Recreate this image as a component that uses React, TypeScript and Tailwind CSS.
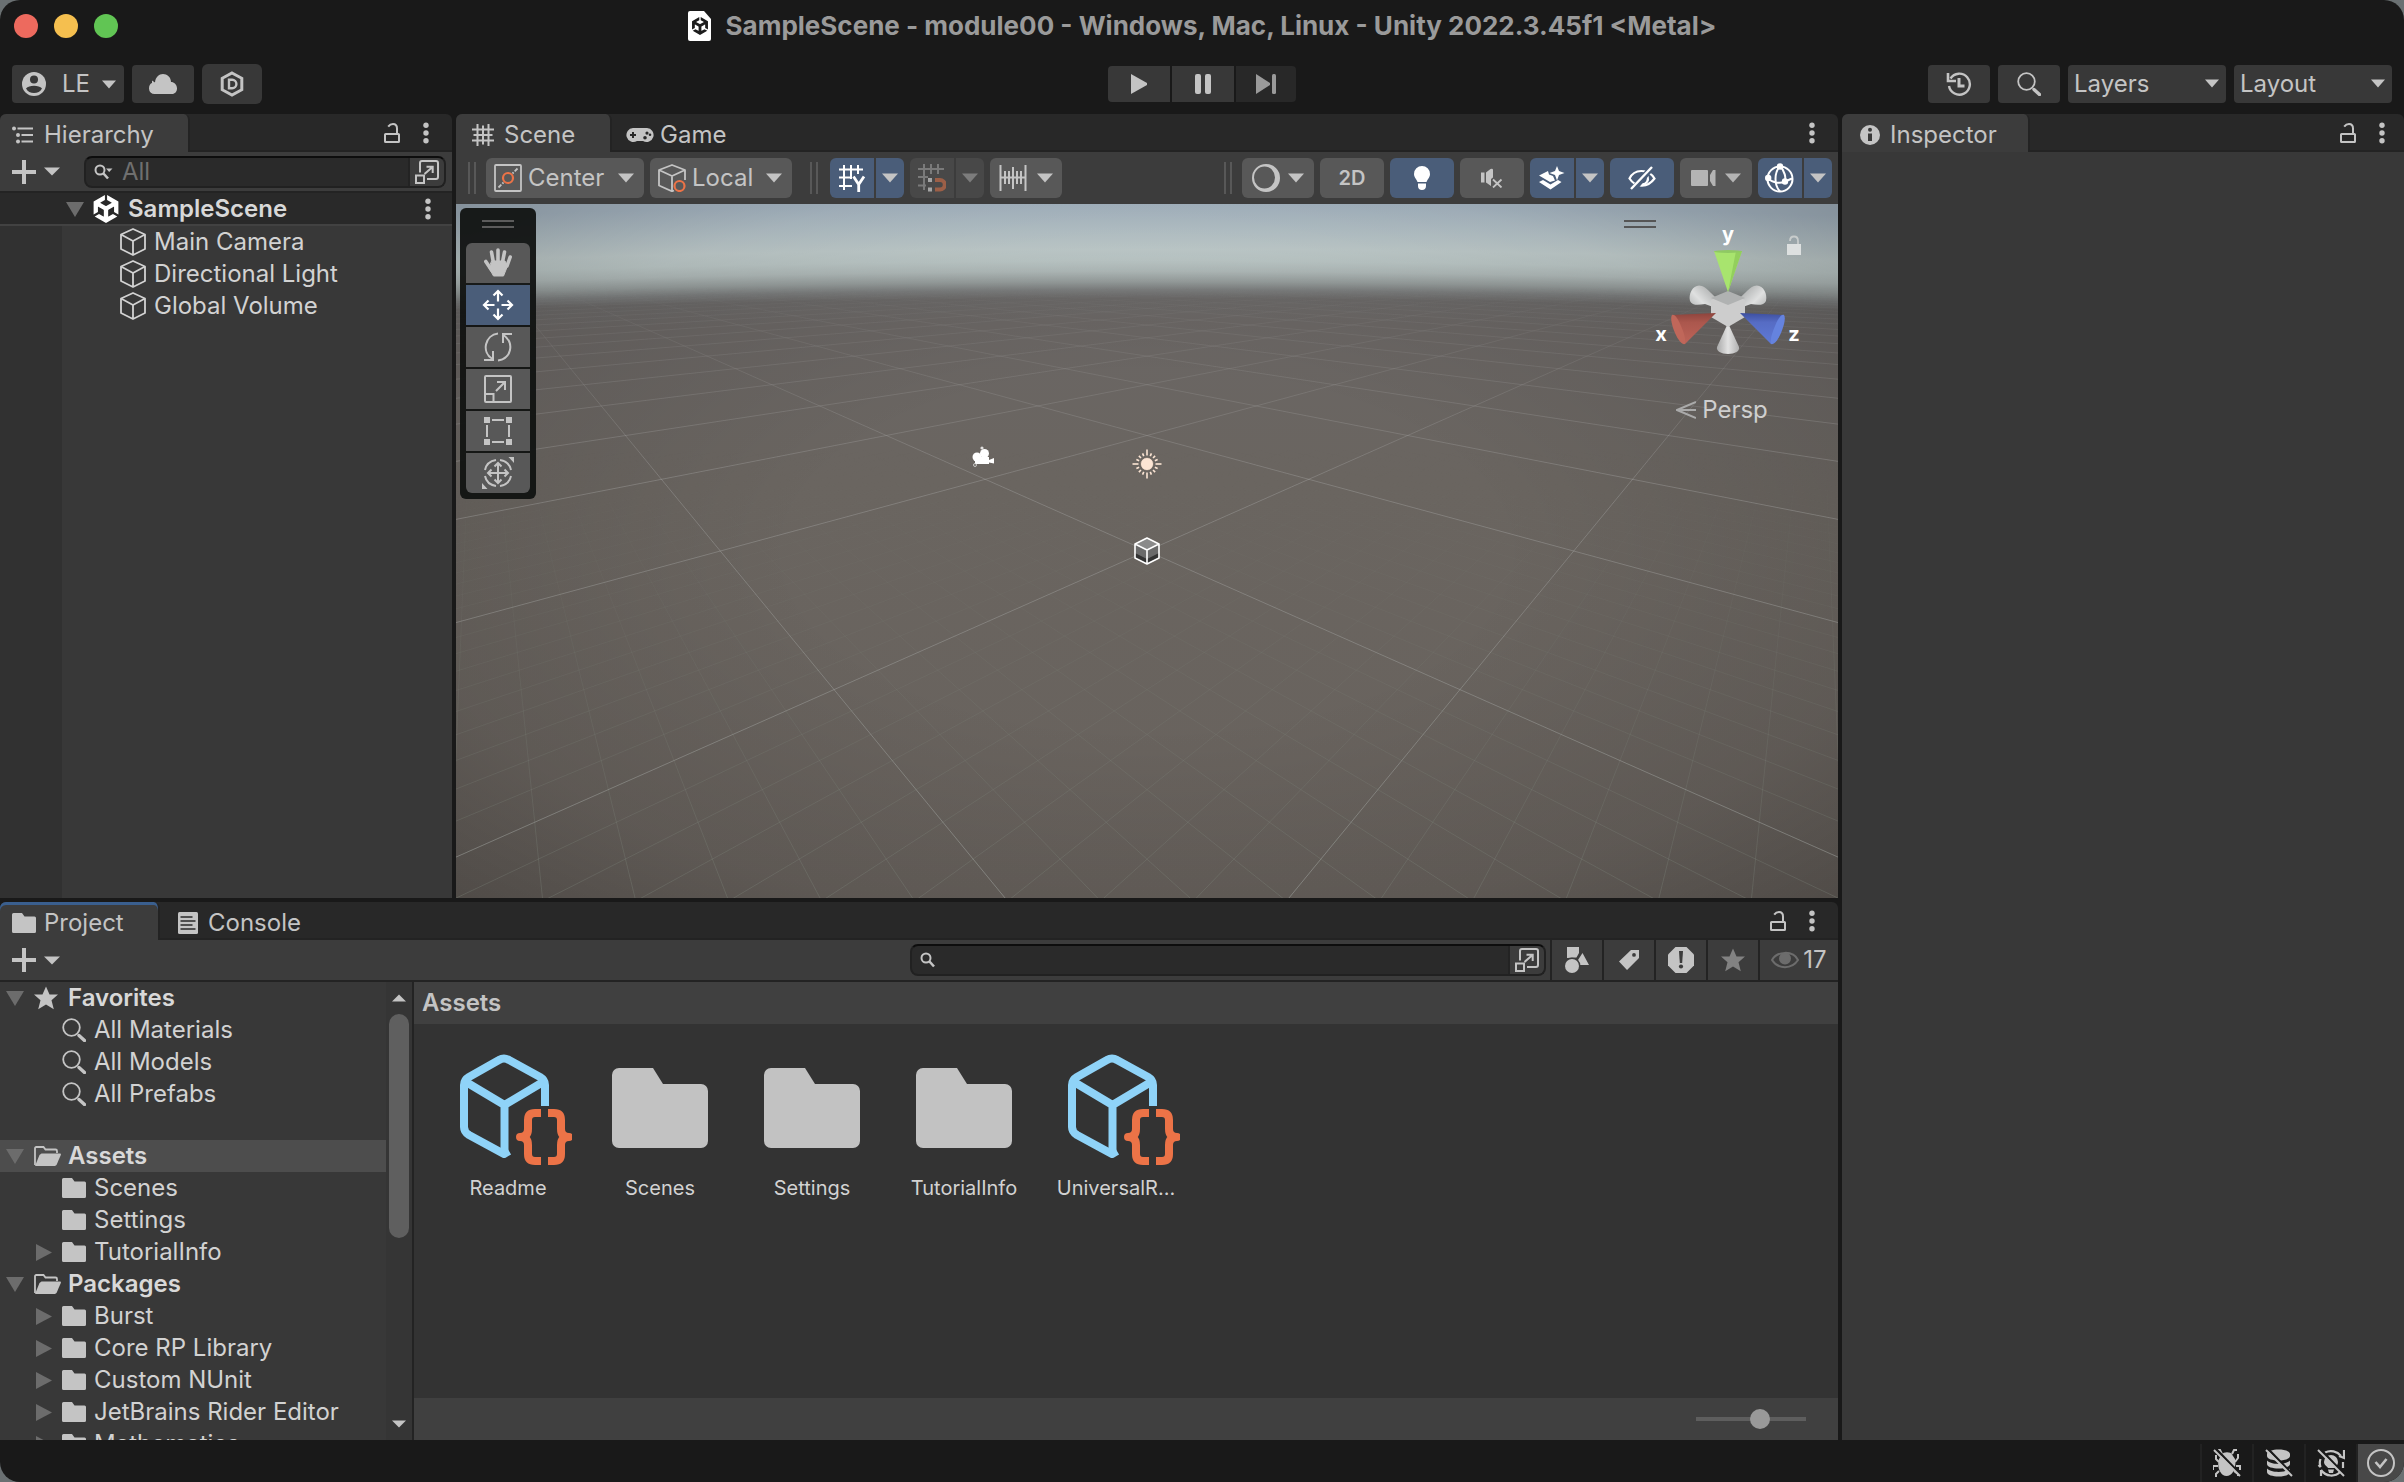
import { useState } from "react";
import type { ReactNode } from "react";
import clsx from "clsx";
import { SiUnity } from "react-icons/si";

type IconProps = { className?: string };

/* ---------- icons ---------- */

function Caret({ className = "w-3.5 h-2.5" }: IconProps) {
  return (
    <svg viewBox="0 0 14 10" preserveAspectRatio="none" className={clsx("shrink-0 fill-current", className)}>
      <path d="M0 0.5h14L7 9.5z" />
    </svg>
  );
}

function Foldout({ open, className }: IconProps & { open: boolean }) {
  return (
    <svg viewBox="0 0 18 18" className={clsx("w-[18px] h-[18px] shrink-0 fill-[#6c6c6c]", className)}>
      <path d={open ? "M0 2h18L9 17z" : "M2 1v17L18 9.500z"} />
    </svg>
  );
}

function Kebab() {
  return (
    <svg viewBox="0 0 6 22" className="w-1.5 h-[22px] fill-current">
      <circle cx="3" cy="3.2" r="2.7" />
      <circle cx="3" cy="11" r="2.7" />
      <circle cx="3" cy="18.8" r="2.7" />
    </svg>
  );
}

function Lock() {
  return (
    <svg viewBox="0 0 16 20" className="w-4 h-5 fill-none stroke-current" strokeWidth="2">
      <rect x="1" y="11" width="14" height="8" rx="0.6" />
      <path d="M13 11V5.5C13 2.8 11.4 1 9 1 7 1 5.400 2 4.200 3.600" />
    </svg>
  );
}

function Cube({ className = "w-[26px] h-7" }: IconProps) {
  return (
    <svg viewBox="0 0 26 28" className={clsx("shrink-0 fill-none stroke-current", className)} strokeWidth="1.8" strokeLinejoin="round">
      <path d="M13 1 25 6.500V21L13 27 1 21V6.500zM1 6.500l12 6.500 12-6.500M13 13v14" />
    </svg>
  );
}

function Plus() {
  return (
    <svg viewBox="0 0 24 24" className="w-6 h-6 fill-current">
      <path d="M10 0h4v10h10v4H14v10h-4V14H0v-4h10z" />
    </svg>
  );
}

function Magnifier({ className = "w-6 h-6" }: IconProps) {
  return (
    <svg viewBox="0 0 24 24" className={clsx("shrink-0 fill-none stroke-current", className)}>
      <circle cx="9.500" cy="9.500" r="8.300" strokeWidth="1.800" />
      <path d="M17 17.500l5.500 5" strokeWidth="3.400" strokeLinecap="round" />
    </svg>
  );
}

function SmallMagnifier({ menu }: { menu?: boolean }) {
  return (
    <svg viewBox="0 0 20 16" className="w-5 h-4 shrink-0 fill-none stroke-current">
      <circle cx="6" cy="6" r="4.500" strokeWidth="2" />
      <path d="M9.500 9.500l4.500 5" strokeWidth="2.600" />
      {menu && <path d="M12 4.500h6.500L15.200 8z" className="fill-current stroke-none" />}
    </svg>
  );
}

function OpenSearch() {
  return (
    <svg viewBox="0 0 24 24" className="w-6 h-6 fill-none stroke-current" strokeWidth="2">
      <path d="M5 12.500V3a2 2 0 0 1 2-2h14a2 2 0 0 1 2 2v14a2 2 0 0 1-2 2H12" />
      <path d="M1 15.500h8V23H1zM9.500 14l8-7M11.500 6.800h6.200V13" />
    </svg>
  );
}

function Folder() {
  return (
    <svg viewBox="0 0 24 20" className="w-6 h-5 shrink-0 fill-current">
      <path d="M1.500 0H10l2.500 3.500H22.500A1.500 1.500 0 0 1 24 5v13.500a1.500 1.500 0 0 1-1.500 1.500h-21A1.500 1.500 0 0 1 0 18.500v-17A1.500 1.500 0 0 1 1.500 0z" />
    </svg>
  );
}

function FolderOpen() {
  return (
    <svg viewBox="0 0 27 20" className="w-[27px] h-5 shrink-0">
      <path d="M1 19V2.200A1.200 1.200 0 0 1 2.200 1H9.500l2 2.500H21.500a1.500 1.500 0 0 1 1.500 1.500V7" className="fill-none stroke-current" strokeWidth="1.800" />
      <path d="M1 20L5.500 9 7.500 7.500H26.500L27 8.500 22.500 19 21 20z" className="fill-current" />
    </svg>
  );
}

function Star({ className = "w-6 h-6" }: IconProps) {
  return (
    <svg viewBox="0 0 24 24" className={clsx("shrink-0 fill-current", className)}>
      <path d="M12 0.500l3.500 8H24l-6.500 5.700 2.300 9L12 18.500l-7.800 4.700 2.300-9L0 8.500h8.500z" />
    </svg>
  );
}

function HierarchyIcon() {
  return (
    <svg viewBox="0 0 22 18" className="w-[22px] h-[18px] fill-current">
      <circle cx="2" cy="2.500" r="2" />
      <circle cx="6" cy="9" r="2" />
      <circle cx="6" cy="15.500" r="2" />
      <path d="M5.500 1.600H21v2H5.500zM9.500 8H21v2H9.500zM9.500 14.500H21v2H9.500z" />
    </svg>
  );
}

function SceneGridIcon() {
  return (
    <svg viewBox="0 0 22 22" className="w-[22px] h-[22px] fill-none stroke-current" strokeWidth="2">
      <path d="M5.500 0v22M11 1.500v19M16.500 0v22M0 5.500h22M1.500 11h19M0 16.500h22" />
    </svg>
  );
}

function Gamepad() {
  return (
    <svg viewBox="0 0 28 16" className="w-7 h-4">
      <path className="fill-current" fillRule="evenodd" d="M7 1h14a7 7 0 1 1-4 13h-6A7 7 0 1 1 7 1zM6 5v2H4v2h2v2h2V9h2V7H8V5zM21 4.500a1.600 1.600 0 1 0 0 3.200 1.600 1.600 0 0 0 0-3.200zM19 9a1.800 1.800 0 1 0 0 3.600A1.800 1.800 0 0 0 19 9zM24 6.500a1.300 1.300 0 1 0 0 2.600 1.300 1.300 0 0 0 0-2.600z" />
    </svg>
  );
}

function ConsoleIcon() {
  return (
    <svg viewBox="0 0 20 22" className="w-5 h-[22px]">
      <rect width="20" height="22" rx="1.500" className="fill-current" />
      <path d="M2.500 5h12M2.500 9h15M2.500 13h12M2.500 17h15" stroke="#282828" strokeWidth="1.700" />
    </svg>
  );
}

function InfoIcon() {
  return (
    <svg viewBox="0 0 20 20" className="w-5 h-5">
      <circle cx="10" cy="10" r="10" className="fill-current" />
      <path d="M8 8.500h4V16H8z" fill="#383838" />
      <circle cx="10" cy="4.800" r="2" fill="#383838" />
    </svg>
  );
}

function UserIcon() {
  return (
    <svg viewBox="0 0 24 24" className="w-6 h-6">
      <circle cx="12" cy="12" r="12" className="fill-current" />
      <circle cx="12" cy="7.500" r="4" fill="#383838" />
      <path d="M4 16.500c3-3.600 13-3.600 16 0-1.500 3-4.500 4.500-8 4.500s-6.500-1.500-8-4.500z" fill="#383838" />
    </svg>
  );
}

function CloudIcon() {
  return (
    <svg viewBox="0 0 28 20" className="w-7 h-5 fill-current">
      <path d="M5.500 20A5.500 5.500 0 0 1 0 14.500C0 11 1.500 9.500 3 9V6.500l3 2C6.500 3 10 0 14 0s8 3 8 8c3 0 6 2.500 6 6.500 0 3-2 5.500-5 5.500z" />
    </svg>
  );
}

function DevOpsIcon() {
  return (
    <svg viewBox="0 0 24 26" className="w-6 h-[26px] fill-none stroke-current">
      <path d="M12 2l9.800 5.300v11.400L12 24l-9.800-5.300V7.300z" strokeWidth="3" />
      <path d="M9 8.800h3.200a4.200 4.200 0 0 1 0 8.400H9z" strokeWidth="2.400" />
    </svg>
  );
}

function HistoryIcon() {
  return (
    <svg viewBox="0 0 26 26" className="w-[26px] h-[26px] fill-none stroke-current">
      <path d="M4.500 7.500A10.500 10.500 0 1 1 3 15" strokeWidth="2.400" />
      <path d="M2 2v8h8" strokeWidth="2.600" />
      <path d="M13 7v8h5.500" strokeWidth="3" />
    </svg>
  );
}

/* scene view toolbar */

function PivotIcon() {
  return (
    <svg viewBox="0 0 28 28" className="w-7 h-7 fill-none">
      <rect x="1" y="1" width="26" height="26" rx="1" className="stroke-current" strokeWidth="1.800" />
      <path d="M23.500 4.500l-5 5M4.500 23.500l5-5" className="stroke-current" strokeWidth="1.800" strokeDasharray="4 1.500" />
      <circle cx="14" cy="14" r="5" stroke="#ec7347" strokeWidth="2.200" />
    </svg>
  );
}

function LocalIcon() {
  return (
    <svg viewBox="0 0 28 28" className="w-7 h-7 fill-none">
      <path d="M16 26.500l-2 .8L1 21.500V6L14 1l13 5v10M1 6l13 6 13-6M14 12v15" className="stroke-current" strokeWidth="1.800" strokeLinejoin="round" />
      <circle cx="21.500" cy="22" r="5" stroke="#ec7347" strokeWidth="2.200" />
    </svg>
  );
}

function GridSnapIcon() {
  return (
    <svg viewBox="0 0 28 28" className="w-7 h-7 fill-none stroke-white" strokeWidth="2">
      <path d="M6 1v25M13 1v14M20 1v9M1 5.500h24M1 13.500h13M1 22h13" />
      <path d="M15.500 12.500l5.200 8M26 12.500l-5.300 8V28" strokeWidth="2.800" />
    </svg>
  );
}

function MagnetIcon() {
  return (
    <svg viewBox="0 0 28 28" className="w-7 h-7 fill-none" strokeWidth="2">
      <path d="M6 0v26M13 0v10M20 0v10M0 5h26M0 13h10M0 21.500h8" stroke="#7a7a7a" />
      <path d="M17 16h5a4.500 4.500 0 0 1 0 9.500h-5" stroke="#9c5f47" strokeWidth="4" />
      <path d="M10 14h4v4h-4zM10 23.500h4v4h-4z" fill="#a5a5a5" />
    </svg>
  );
}

function IncrementIcon() {
  return (
    <svg viewBox="0 0 28 28" className="w-7 h-7 fill-none stroke-current" strokeWidth="2">
      <path d="M1.500 1v26M26.500 1v26M14 3v22M6 7v13M10 7v13M18 7v13M22 7v13M1 13.500h26" />
    </svg>
  );
}

function ShadingIcon() {
  return (
    <svg viewBox="0 0 28 28" className="w-7 h-7">
      <path fillRule="evenodd" className="fill-current" d="M14 0a14 14 0 1 0 0 28 14 14 0 0 0 0-28zM12.500 2.500a10.500 11 0 1 1 0 22 10.500 11 0 0 1 0-22z" />
    </svg>
  );
}

function BulbIcon() {
  return (
    <svg viewBox="0 0 16 24" className="w-4 h-6 fill-white">
      <path d="M8 0a8 8 0 0 1 8 8c0 3.500-2.500 5-3.500 8h-9C2.500 13 0 11.500 0 8a8 8 0 0 1 8-8zM4 17.500h8V20c0 2.500-1.500 4-4 4s-4-1.500-4-4z" />
    </svg>
  );
}

function MuteIcon() {
  return (
    <svg viewBox="0 0 22 20" className="w-[22px] h-5">
      <path d="M0 4.500h3.500v10H0zM5 4.500L9.500 1Q12 0 12 2v7.500l-2 1.500v7L5 14.500z" className="fill-current" />
      <path d="M12 11.500l8.500 8M20.500 11.500l-8.500 8" className="fill-none stroke-current" strokeWidth="1.800" />
    </svg>
  );
}

function EffectsIcon() {
  return (
    <svg viewBox="0 0 26 24" className="w-[26px] h-6 fill-white">
      <path d="M18 0l2 5 5.500 2-5.500 2-2 5.500L16 9l-5.500-2L16 5z" />
      <path d="M0 9.500L9 5l1 3.500 4 1.500 2 4.500-5 1.500zM0 16l4-2 7.500 4.500L19 14l3.500 2L11.500 23.500z" />
    </svg>
  );
}

function HiddenIcon() {
  return (
    <svg viewBox="0 0 28 24" className="w-7 h-6 fill-none stroke-white" strokeWidth="2.200">
      <path d="M1.500 12.500C6 3 20 2 26.500 12.500 20 21.500 8 22.500 1.500 12.500z" />
      <path d="M16 7.500a5.500 5.500 0 1 1-6 8.500" />
      <path d="M5 24L24 1" stroke="#4a5d79" strokeWidth="6" />
      <path d="M3 23L24 1" strokeWidth="2.400" />
    </svg>
  );
}

function CameraIcon() {
  return (
    <svg viewBox="0 0 26 18" className="w-[26px] h-[18px] fill-current">
      <rect y="1" width="17" height="16" rx="1" />
      <path d="M19 6l3-5h2.500v16H22l-3-5z" />
    </svg>
  );
}

function GizmoIcon() {
  return (
    <svg viewBox="0 0 30 30" className="w-[30px] h-[30px] fill-none stroke-white" strokeWidth="2">
      <circle cx="15" cy="16" r="12.500" />
      <path d="M15 3c-6 7-6 19 0 25.500M15 3c5 5 6 12 5 16M3 15c4 5 12 6 17 3.500l7-3" />
      <g className="fill-white stroke-none">
        <circle cx="15" cy="3.500" r="3.200" />
        <circle cx="3.200" cy="15" r="3.200" />
        <circle cx="20" cy="18.500" r="3.200" />
      </g>
    </svg>
  );
}

/* scene tools */

function HandTool() {
  return (
    <svg viewBox="0 0 28 30" className="w-7 h-[30px] fill-current stroke-current" strokeWidth="3.600" strokeLinecap="round">
      <path d="M9.500 15L7.500 4M14 14V2M18.500 14l2-10M23 18l3.200-9M7.500 22L1.800 13.500" className="fill-none" />
      <path d="M8 13h13l2.500 5L19.500 28h-10L5 20z" strokeWidth="1" />
    </svg>
  );
}

function MoveTool() {
  return (
    <svg viewBox="0 0 32 32" className="w-8 h-8 fill-none stroke-white" strokeWidth="2.200">
      <path d="M16 2v10.500M11.500 6.500L16 2l4.500 4.500M16 30V19.500M11.500 25.500L16 30l4.500-4.500M2 16h10.500M6.500 11.500L2 16l4.500 4.500M30 16H19.500M25.500 11.500L30 16l-4.500 4.500" />
    </svg>
  );
}

function RotateTool() {
  return (
    <svg viewBox="0 0 32 32" className="w-8 h-8 fill-none stroke-current" strokeWidth="2">
      <path d="M16 2.500C3 4 -1 21 10.500 28M16 29.500c13-2 17-17 5.500-25.500" />
      <path d="M21 12V3h9M2 29h9v-9" />
    </svg>
  );
}

function ScaleTool() {
  return (
    <svg viewBox="0 0 28 28" className="w-7 h-7 fill-none stroke-current" strokeWidth="2">
      <rect x="1" y="1" width="26" height="26" rx="1" />
      <path d="M1 19h8.500v8M12 16l9-9M13 7h8v8" />
    </svg>
  );
}

function RectTool() {
  return (
    <svg viewBox="0 0 28 28" className="w-7 h-7 fill-current">
      <path d="M0 0h6v6H0zM22 0h6v6h-6zM0 22h6v6H0zM22 22h6v6h-6zM8 2h12v2H8zM8 24h12v2H8zM2 8h2v12H2zM24 8h2v12h-2z" />
    </svg>
  );
}

function TransformTool() {
  return (
    <svg viewBox="0 0 32 32" className="w-8 h-8 fill-none stroke-current" strokeWidth="2">
      <path d="M14 3C8 4 4 8 3 13M3 19c1 5 5 9 11 10M18 29c6-1 10-5 11-10M29 13c-1-5-5-9-11-10" />
      <path d="M16 6v20M6 16h20M12.500 9.500L16 6l3.500 3.500M12.500 22.500L16 26l3.500-3.500M9.500 12.500L6 16l3.500 3.500M22.500 12.500L26 16l-3.500 3.500" />
      <path d="M26.500 0H32v6zM0 32v-6l5.500 6z" className="fill-current stroke-none" />
    </svg>
  );
}

/* project toolbar */

function TypeFilterIcon() {
  return (
    <svg viewBox="0 0 24 26" className="w-6 h-[26px] fill-current">
      <path d="M2 0h12v6l-2.500 4.500L2 11zM17.500 6L24 18h-9l-2-5z" />
      <circle cx="7" cy="19" r="8.500" fill="#3c3c3c" />
      <circle cx="7" cy="19" r="7" />
    </svg>
  );
}

function TagIcon() {
  return (
    <svg viewBox="0 0 20 20" className="w-5 h-5 fill-current">
      <path fillRule="evenodd" d="M12 0h8v8L8 20l-8-8.500zM15 3a1.900 1.900 0 1 0 0 3.800A1.900 1.900 0 0 0 15 3z" />
    </svg>
  );
}

function AlertIcon() {
  return (
    <svg viewBox="0 0 26 26" className="w-[26px] h-[26px]">
      <path d="M7.500 0h11L26 7.500v11L18.500 26h-11L0 18.500v-11z" className="fill-current" />
      <path d="M11 4h4l-.8 12h-2.400z" fill="#3c3c3c" />
      <circle cx="13" cy="19.500" r="2.100" fill="#3c3c3c" />
    </svg>
  );
}

function EyeIcon() {
  return (
    <svg viewBox="0 0 28 18" className="w-7 h-[18px]">
      <path d="M1 9C6 0 22-1 27 9 21 18.500 7 18.500 1 9z" fill="none" stroke="#6c6c6c" strokeWidth="2" />
      <circle cx="14" cy="7.500" r="6" fill="#6c6c6c" />
    </svg>
  );
}

/* status bar */

function BugOffIcon() {
  return (
    <svg viewBox="0 0 28 28" className="w-7 h-7">
      <path d="M9 5.500C10 2.500 18 2.500 19 5.500L22 10c1.500 6-1 14-5 16-2 1.200-5 1.200-7 0-4-3-6-10-4-16z" className="fill-current" />
      <path d="M9 5L7 1H5M19 5l2-4h3M6 13l-3-3V6M22 13l3-4V5M5 17H0v4M23 17h4v4M6 22l-3 3v3M21 22l4 3v2" className="fill-none stroke-current" strokeWidth="2" />
      <path d="M3 0l25 26" stroke="#191919" strokeWidth="2.500" />
      <path d="M1 1l26 26" className="stroke-current" strokeWidth="2" />
    </svg>
  );
}

function CacheOffIcon() {
  return (
    <svg viewBox="0 0 28 28" className="w-7 h-7">
      <path d="M2 5c0-6 23-6 23 0v2c0 6-23 6-23 0zM2 11.500c4 4.500 19 4.500 23 0V15c0 6-23 6-23 0zM2 19.500c4 4.500 19 4.500 23 0V23c0 6-23 6-23 0z" className="fill-current" />
      <path d="M3 0l25 26" stroke="#191919" strokeWidth="2.500" />
      <path d="M1 1l26 26" className="stroke-current" strokeWidth="2" />
    </svg>
  );
}

function AutoLightOffIcon() {
  return (
    <svg viewBox="0 0 28 28" className="w-7 h-7">
      <path d="M8 3.500A13 13 0 0 1 24 7M27 1v8l-5-2M3.500 10a12 12 0 0 0 0 8l-2-2M4 21v6M4 21c5 7 14 7 19 2M26 19v-6" className="fill-none stroke-current" strokeWidth="2.200" />
      <path d="M14 6a7 7 0 0 1 7 7c0 3-2 4-3 6h-7c-1-2-4-3-4-6a7 7 0 0 1 7-7zM11 20.500h6L16 24h-4z" className="fill-current" />
      <path d="M3 0l25 26" stroke="#191919" strokeWidth="2.500" />
      <path d="M1 1l26 26" className="stroke-current" strokeWidth="2" />
    </svg>
  );
}

function DoneIcon() {
  return (
    <svg viewBox="0 0 28 28" className="w-7 h-7 fill-none stroke-current">
      <circle cx="14" cy="14" r="13" strokeWidth="2" />
      <path d="M8.500 13l4.500 5 6.500-8" strokeWidth="2.600" />
    </svg>
  );
}

/* ---------- shared bits ---------- */

function IconButton({ label, className, children }: { label: string; className?: string; children: ReactNode }) {
  return (
    <button type="button" aria-label={label} className={clsx("flex items-center justify-center shrink-0", className)}>
      {children}
    </button>
  );
}

function Tab({ active, className, children }: { active?: boolean; className?: string; children: ReactNode }) {
  return (
    <button
      type="button"
      role="tab"
      aria-selected={!!active}
      className={clsx(
        "flex items-center h-full shrink-0 pt-1",
        active && "bg-[#3c3c3c] rounded-t-md border-r-2 border-[#232323]",
        className
      )}
    >
      {children}
    </button>
  );
}

function TabBar({ lock, className = "pr-3", children }: { lock?: boolean; className?: string; children: ReactNode }) {
  return (
    <div className={clsx("h-[38px] shrink-0 flex bg-[#282828] rounded-t-md shadow-[inset_0_-2px_0_#232323]", className)}>
      <div role="tablist" className="flex flex-1">{children}</div>
      <div className="flex items-center gap-1">
        {lock && <IconButton label="Lock" className="w-8 h-8"><Lock /></IconButton>}
        <IconButton label="Options" className="w-7 h-8"><Kebab /></IconButton>
      </div>
    </div>
  );
}

function SearchBox({ menu, placeholder, className }: { menu?: boolean; placeholder?: string; className?: string }) {
  return (
    <div className={clsx("flex h-8 bg-[#2a2a2a] border-2 border-[#212121] border-t-[#0d0d0d] rounded-lg overflow-hidden", className)}>
      <label className="flex flex-1 items-center gap-2 pl-2 min-w-0">
        <SmallMagnifier menu={menu} />
        <input
          aria-label="Search"
          placeholder={placeholder}
          className="flex-1 min-w-0 bg-transparent outline-none placeholder:text-[#6f6f6f]"
        />
      </label>
      <IconButton label="Open in search" className="w-9 bg-[#3c3c3c] border-l-2 border-[#232323]"><OpenSearch /></IconButton>
    </div>
  );
}

function AddButton() {
  return (
    <button type="button" aria-label="Create" className="flex items-center gap-2 pl-3">
      <Plus />
      <Caret className="w-4 h-[9px]" />
    </button>
  );
}

/* ---------- window chrome ---------- */

function TitleBar() {
  return (
    <header className="h-[52px] shrink-0 flex items-center px-3.5">
      <div className="flex flex-1 gap-4">
        <button type="button" aria-label="Close" className="w-6 h-6 rounded-full bg-[#ed6a5e]" />
        <button type="button" aria-label="Minimize" className="w-6 h-6 rounded-full bg-[#f5bf4f]" />
        <button type="button" aria-label="Zoom" className="w-6 h-6 rounded-full bg-[#61c554]" />
      </div>
      <div className="flex items-center gap-3.5 text-[#9a9a9a]">
        <span className="relative flex w-6 h-[30px] items-center justify-center">
          <svg viewBox="0 0 24 30" className="absolute inset-0 fill-white"><path d="M2 0h14l7 8v20a2 2 0 0 1-2 2H2a2 2 0 0 1-2-2V2a2 2 0 0 1 2-2z" /></svg>
          <SiUnity className="relative w-[18px] h-[18px] text-[#1c1c1c]" />
        </span>
        <h1 className="text-[26px] leading-8 font-bold whitespace-nowrap">
          SampleScene - module00 - Windows, Mac, Linux - Unity 2022.3.45f1 &lt;Metal&gt;
        </h1>
      </div>
      <div className="flex-1" />
    </header>
  );
}

function ToolbarSelect({ label }: { label: string }) {
  return (
    <div className="relative w-[158px] h-[38px] rounded bg-[#383838]">
      <select aria-label={label} className="w-full h-full appearance-none bg-transparent pl-1.5 outline-none">
        <option>{label}</option>
      </select>
      <Caret className="absolute right-[7px] top-3.5 w-3.5 h-[9px] pointer-events-none" />
    </div>
  );
}

function MainToolbar() {
  return (
    <div className="h-[62px] shrink-0 flex items-center px-3 pt-0.5">
      <div className="flex flex-1 items-center gap-2">
        <button type="button" className="flex items-center w-28 h-[38px] rounded bg-[#383838] pl-2.5">
          <UserIcon />
          <span className="pl-4 pr-3">LE</span>
          <Caret className="w-3.5 h-[9px]" />
        </button>
        <IconButton label="Unity Cloud" className="w-[62px] h-[38px] rounded bg-[#383838]"><CloudIcon /></IconButton>
        <IconButton label="Unity DevOps" className="w-[60px] h-10 rounded-md bg-[#383838]"><DevOpsIcon /></IconButton>
      </div>
      <div className="flex gap-0.5">
        <IconButton label="Play" className="w-[62px] h-9 rounded-l bg-[#383838]">
          <svg viewBox="0 0 18 20" className="w-[18px] h-5 fill-current"><path d="M1 0l16 9v2L1 20z" /></svg>
        </IconButton>
        <IconButton label="Pause" className="w-[62px] h-9 bg-[#383838]">
          <svg viewBox="0 0 18 20" className="w-[18px] h-5 fill-current"><rect x="1" width="6" height="20" rx="2" /><rect x="11" width="6" height="20" rx="2" /></svg>
        </IconButton>
        <IconButton label="Step" className="w-[60px] h-9 rounded-r bg-[#282828] text-[#9a9a9a]">
          <svg viewBox="0 0 20 20" className="w-5 h-5 fill-current"><path d="M0 0l14 9v2L0 20z" /><rect x="16" width="4" height="20" rx="1.500" /></svg>
        </IconButton>
      </div>
      <div className="flex flex-1 justify-end gap-2">
        <IconButton label="Undo history" className="w-[62px] h-[38px] rounded bg-[#383838]"><HistoryIcon /></IconButton>
        <IconButton label="Search" className="w-[62px] h-[38px] rounded bg-[#383838]"><Magnifier /></IconButton>
        <ToolbarSelect label="Layers" />
        <ToolbarSelect label="Layout" />
      </div>
    </div>
  );
}

/* ---------- hierarchy ---------- */

const sceneObjects = ["Main Camera", "Directional Light", "Global Volume"];

function Hierarchy() {
  return (
    <section className="w-[452px] shrink-0 flex flex-col">
      <TabBar lock>
        <Tab active className="w-[190px] gap-2.5 pl-3"><HierarchyIcon />Hierarchy</Tab>
      </TabBar>
      <div className="h-[41px] shrink-0 flex items-center bg-[#3c3c3c] border-b-2 border-[#232323] pr-1.5">
        <AddButton />
        <SearchBox menu placeholder="All" className="ml-6 flex-1" />
      </div>
      <div className="flex-1 flex flex-col bg-[#383838]">
        <div className="h-[33px] shrink-0 flex items-center bg-[#292929] border-b-2 border-[#424242] pl-[66px] pr-[21px]">
          <Foldout open />
          <SiUnity className="ml-2 w-7 h-7 text-white" />
          <span className="pl-2 flex-1 font-semibold text-[#d8d8d8]">SampleScene</span>
          <Kebab />
        </div>
        <div className="flex-1 flex">
          <div className="w-[62px] bg-[#313131]" />
          <ul className="flex-1">
            {sceneObjects.map((name) => (
              <li key={name} className="h-8 flex items-center gap-2 pl-[58px] text-[#d2d2d2]">
                <Cube />
                {name}
              </li>
            ))}
          </ul>
        </div>
      </div>
    </section>
  );
}

/* ---------- scene view ---------- */

const CX = 691;
const CY = 347;
const FOCAL = 601;
const CELL = 0.502;

// Camera orbits the origin at distance 1, yaw 45 deg, pitch ~26 deg.
function project(a: number, c: number) {
  const forward = (a + c) * 0.7071;
  const right = (a - c) * 0.7071;
  const depth = 1 + forward * 0.8965;
  return [CX + (FOCAL * right) / depth, CY - (FOCAL * forward * 0.443) / depth];
}

function gridPath(step: number, from: number, to: number, far: number) {
  let d = "";
  for (let i = from; i <= to; i++) {
    const a = i * step;
    const near = -1.42 - a;
    if (near > far) continue;
    const [x1, y1] = project(a, near);
    const [x2, y2] = project(a, far);
    d += `M${x1.toFixed(1)} ${y1.toFixed(1)}L${x2.toFixed(1)} ${y2.toFixed(1)}`;
    d += `M${(2 * CX - x1).toFixed(1)} ${y1.toFixed(1)}L${(2 * CX - x2).toFixed(1)} ${y2.toFixed(1)}`;
  }
  return d;
}

const majorGrid = gridPath(CELL, -14, 26, 26 * CELL);
const minorGrid = gridPath(CELL / 10, -36, 40, 40 * CELL / 10);

function Viewport() {
  return (
    <svg viewBox="0 0 1382 694" preserveAspectRatio="xMidYMid slice" className="absolute inset-0 w-full h-full" role="img" aria-label="Scene view">
      <defs>
        <radialGradient id="sky" gradientUnits="userSpaceOnUse" cx="691" cy="20000" r="20000" fr="19306">
          <stop offset="0" stopColor="#68625d" />
          <stop offset="0.6" stopColor="#6a6560" />
          <stop offset="0.83" stopColor="#6a6664" />
          <stop offset="0.864" stopColor="#6b6968" />
          <stop offset="0.876" stopColor="#7c7e7e" />
          <stop offset="0.888" stopColor="#989f9e" />
          <stop offset="0.903" stopColor="#b3bdbc" />
          <stop offset="0.918" stopColor="#c0cccb" />
          <stop offset="0.935" stopColor="#c5d1d1" />
          <stop offset="0.96" stopColor="#bccacf" />
          <stop offset="1" stopColor="#adbdca" />
        </radialGradient>
        <radialGradient id="vignette" cx="0.5" cy="0.5" r="0.72">
          <stop offset="0.35" stopColor="#000" stopOpacity="0" />
          <stop offset="0.75" stopColor="#000" stopOpacity="0.1" />
          <stop offset="1" stopColor="#000" stopOpacity="0.24" />
        </radialGradient>
        <linearGradient id="fadeMajor" x1="0" y1="0" x2="0" y2="1">
          <stop offset="0.12" stopColor="#000" />
          <stop offset="0.17" stopColor="#444" />
          <stop offset="0.4" stopColor="#fff" />
        </linearGradient>
        <linearGradient id="fadeMinor" x1="0" y1="0" x2="0" y2="1">
          <stop offset="0.35" stopColor="#000" />
          <stop offset="0.6" stopColor="#555" />
          <stop offset="1" stopColor="#fff" />
        </linearGradient>
        <mask id="maskMajor" maskUnits="userSpaceOnUse" x="0" y="0" width="1382" height="694">
          <rect width="1382" height="694" fill="url(#fadeMajor)" />
        </mask>
        <mask id="maskMinor" maskUnits="userSpaceOnUse" x="0" y="0" width="1382" height="694">
          <rect width="1382" height="694" fill="url(#fadeMinor)" />
        </mask>
      </defs>
      <rect width="1382" height="694" fill="url(#sky)" />
      <rect width="1382" height="694" fill="url(#vignette)" />
      <g mask="url(#maskMinor)">
        <path d={minorGrid} fill="none" stroke="#8a968a" strokeOpacity="0.26" />
      </g>
      <g mask="url(#maskMajor)">
        <path d={majorGrid} fill="none" stroke="#b4b4b4" strokeOpacity="0.32" />
      </g>

      {/* camera gizmo */}
      <g transform="translate(516 243)" fill="#fff">
        <circle cx="5" cy="10" r="4.500" />
        <circle cx="12.500" cy="6.500" r="4.500" />
        <path d="M3 10h14v3l5-2v5.500l-5-1V17H3z" />
        <circle cx="10" cy="1" r="1.600" opacity="0.8" />
        <circle cx="3" cy="18" r="1.500" fill="none" stroke="#ddd" strokeWidth="0.800" />
      </g>

      {/* directional light gizmo */}
      <g transform="translate(691 260)" fill="#fce5d4" stroke="#fce5d4">
        <circle r="6.500" stroke="#5c544d" strokeWidth="0.600" />
        {Array.from({ length: 16 }, (_, i) => (
          <path key={i} d={i % 4 === 0 ? "M8.500 0H14.500" : "M8.500 0H11.500"} strokeWidth="1.600" transform={`rotate(${i * 22.5})`} />
        ))}
      </g>

      {/* volume gizmo */}
      <g transform="translate(691 347)">
        <path d="M0-13L12-7 0-1-12-7z" fill="#8a8a8a" />
        <path d="M-12-7L0-1V13L-12 7zM12-7L0-1V13L12 7z" fill="#6a6a6a" />
        <path d="M-12 2L0 8 12 2V7L0 13-12 7z" fill="#333" />
        <path d="M0-13L12-7V7L0 13-12 7V-7zM-12-7L0-1 12-7M0-1V13" fill="none" stroke="#fff" strokeWidth="1.600" strokeLinejoin="round" />
      </g>
    </svg>
  );
}

function AxisGizmo() {
  const backCone = "M72 86C64 82 60 74 54 72 46 69 40 79 42 87 44 92 51 91 57 90L68 94z";
  return (
    <svg viewBox="0 0 160 140" className="w-40 h-[140px]" aria-label="Orientation gizmo">
      <defs>
        <linearGradient id="greyCone" x1="0" x2="1"><stop offset="0" stopColor="#a8a8a8" /><stop offset="0.5" stopColor="#e2e2e2" /><stop offset="1" stopColor="#b0b0b0" /></linearGradient>
        <linearGradient id="backCone" x1="0" x2="1" y1="1" y2="0.3"><stop offset="0" stopColor="#b2b4b4" /><stop offset="0.4" stopColor="#dfe0e0" /><stop offset="1" stopColor="#a4a6a6" /></linearGradient>
        <linearGradient id="redCone" x1="0" x2="0" y1="0" y2="1"><stop offset="0" stopColor="#8d443d" /><stop offset="0.3" stopColor="#ab574d" /><stop offset="1" stopColor="#bd6459" /></linearGradient>
        <linearGradient id="blueCone" x1="0" x2="0" y1="0" y2="1"><stop offset="0" stopColor="#3d4f9f" /><stop offset="0.3" stopColor="#566cc4" /><stop offset="1" stopColor="#5f7ad6" /></linearGradient>
      </defs>
      <path d={backCone} fill="url(#backCone)" />
      <path d={backCone} transform="translate(160 0) scale(-1 1)" fill="url(#backCone)" />
      <path d="M80 111L69 135c-1 4 4 7 11 7s12-3 11-7z" transform="translate(0 -2)" fill="url(#greyCone)" />
      <path d="M80 78l17 8v17L80 113 63 103V86z" fill="#cdcdcd" />
      <path d="M80 77l17 7-17 7-17-7z" fill="#b0b2b2" />
      <path d="M80 78L66 37h28z" fill="#a8e46e" />
      <path d="M80 78L88 37h6z" fill="#93cf5d" />
      <ellipse cx="80" cy="37.500" rx="14" ry="1.500" fill="#8fc963" />
      <path d="M68 99L24 101 37 130z" fill="url(#redCone)" />
      <path d="M24 101c3-1 6 4 9 11s5 13 4 18c-3 1-7-4-10-11s-5-15-3-18z" fill="#c0675a" />
      <path d="M92 99l44 2-13 29z" fill="url(#blueCone)" />
      <path d="M136 101c-3-1-6 4-9 11s-5 13-4 18c3 1 7-4 10-11s5-15 3-18z" fill="#6583de" />
      <g className="fill-white font-bold text-xl" textAnchor="middle">
        <text x="80" y="27">y</text>
        <text x="13" y="127">x</text>
        <text x="146" y="127">z</text>
      </g>
      <path d="M139 30h14v11h-14z" fill="#dde0e0" />
      <path d="M142 27c0-6 8-6 8 0v3" fill="none" stroke="#c8cccc" strokeWidth="1.800" />
    </svg>
  );
}

const tools = [
  { name: "View tool", icon: <HandTool /> },
  { name: "Move tool", icon: <MoveTool /> },
  { name: "Rotate tool", icon: <RotateTool /> },
  { name: "Scale tool", icon: <ScaleTool /> },
  { name: "Rect tool", icon: <RectTool /> },
  { name: "Transform tool", icon: <TransformTool /> },
];

function ToolPalette() {
  const [tool, setTool] = useState("Move tool");
  return (
    <div className="absolute left-1 top-1 w-[76px] px-1.5 pb-1.5 rounded-md bg-[#111312]/95">
      <div className="h-[35px] flex flex-col items-center gap-1 pt-3">
        <span className="w-8 h-0.5 bg-[#5c5c5c]" />
        <span className="w-8 h-0.5 bg-[#5c5c5c]" />
      </div>
      <div className="flex flex-col gap-0.5 rounded-md overflow-hidden">
        {tools.map((t) => (
          <button
            key={t.name}
            type="button"
            aria-label={t.name}
            aria-pressed={t.name === tool}
            onClick={() => setTool(t.name)}
            className={clsx("h-10 flex items-center justify-center", t.name === tool ? "bg-[#4a5d79]" : "bg-[#585858]")}
          >
            {t.icon}
          </button>
        ))}
      </div>
    </div>
  );
}

function Grip({ className }: IconProps) {
  return <div className={clsx("w-2 h-8 shrink-0 border-x-2 border-[#585858]", className)} />;
}

function SplitButton({ label, tone, children }: { label: string; tone: string; children: ReactNode }) {
  return (
    <div className={clsx("flex gap-0.5 shrink-0", tone)}>
      <IconButton label={label} className="w-11 h-10 rounded-l-md bg-(--tone)">{children}</IconButton>
      <IconButton label={`${label} options`} className="w-7 h-10 rounded-r-md bg-(--tone)"><Caret className="w-4 h-2.5" /></IconButton>
    </div>
  );
}

function SceneToolbar() {
  return (
    <div className="h-[52px] shrink-0 flex items-center justify-between bg-[#3c3c3c] pl-3 pr-1.5">
      <div className="flex items-center gap-1.5">
        <Grip className="mr-1" />
        <button type="button" className="flex items-center w-[158px] h-10 rounded-md bg-[#585858] pl-2">
          <PivotIcon />
          <span className="flex-1 text-left pl-1.5">Center</span>
          <Caret className="w-4 h-2.5 mr-2.5" />
        </button>
        <button type="button" className="flex items-center w-[142px] h-10 rounded-md bg-[#585858] pl-2">
          <LocalIcon />
          <span className="flex-1 text-left pl-1.5">Local</span>
          <Caret className="w-4 h-2.5 mr-2.5" />
        </button>
        <Grip className="ml-3 mr-1.5" />
        <SplitButton label="Grid" tone="[--tone:#4a5d79]"><GridSnapIcon /></SplitButton>
        <SplitButton label="Grid snapping" tone="[--tone:#484848] text-[#7c7c7c]"><MagnetIcon /></SplitButton>
        <IconButton label="Increment snapping" className="w-[72px] h-10 rounded-md bg-[#585858] gap-2.5"><IncrementIcon /><Caret className="w-4 h-2.5" /></IconButton>
      </div>
      <div className="flex items-center gap-1.5">
        <Grip className="mr-1" />
        <IconButton label="Draw mode" className="w-[72px] h-10 rounded-md bg-[#585858] gap-2"><ShadingIcon /><Caret className="w-4 h-2.5" /></IconButton>
        <button type="button" className="w-16 h-10 rounded-md bg-[#585858] text-xl font-semibold">2D</button>
        <IconButton label="Scene lighting" className="w-16 h-10 rounded-md bg-[#4a5d79]"><BulbIcon /></IconButton>
        <IconButton label="Scene audio" className="w-16 h-10 rounded-md bg-[#585858]"><MuteIcon /></IconButton>
        <SplitButton label="Effects" tone="[--tone:#4a5d79]"><EffectsIcon /></SplitButton>
        <IconButton label="Hidden objects" className="w-16 h-10 rounded-md bg-[#4a5d79]"><HiddenIcon /></IconButton>
        <IconButton label="Scene camera" className="w-[72px] h-10 rounded-md bg-[#585858] gap-2 text-[#b4b4b4]"><CameraIcon /><Caret className="w-4 h-2.5" /></IconButton>
        <SplitButton label="Gizmos" tone="[--tone:#4a5d79]"><GizmoIcon /></SplitButton>
      </div>
    </div>
  );
}

function SceneView() {
  return (
    <section className="flex-1 min-w-0 flex flex-col">
      <TabBar>
        <Tab active className="w-[156px] gap-2.5 pl-4"><SceneGridIcon />Scene</Tab>
        <Tab className="gap-1.5 pl-3.5"><Gamepad />Game</Tab>
      </TabBar>
      <SceneToolbar />
      <div className="relative flex-1 overflow-hidden bg-[#66615d]">
        <Viewport />
        <ToolPalette />
        <div className="absolute top-4 right-[182px] flex flex-col gap-1">
          <span className="w-8 h-0.5 bg-[#555]" />
          <span className="w-8 h-0.5 bg-[#555]" />
        </div>
        <div className="absolute top-2.5 right-[30px] w-40 flex flex-col items-center">
          <AxisGizmo />
          <button type="button" className="mt-10 mr-3 flex items-center gap-1.5 text-[#cfcfcf]">
            <svg viewBox="0 0 20 18" className="w-5 h-[18px] fill-none stroke-[#aaa]" strokeWidth="2"><path d="M20 1L1 9l19 8M1 9h19" /></svg>
            Persp
          </button>
        </div>
      </div>
    </section>
  );
}

/* ---------- project ---------- */

type Row = { name: string; kind: "root" | "search" | "folder" | "package"; gap?: boolean };

const rows: Row[] = [
  { name: "Favorites", kind: "root" },
  { name: "All Materials", kind: "search" },
  { name: "All Models", kind: "search" },
  { name: "All Prefabs", kind: "search" },
  { name: "Assets", kind: "root", gap: true },
  { name: "Scenes", kind: "folder" },
  { name: "Settings", kind: "folder" },
  { name: "TutorialInfo", kind: "package" },
  { name: "Packages", kind: "root" },
  { name: "Burst", kind: "package" },
  { name: "Core RP Library", kind: "package" },
  { name: "Custom NUnit", kind: "package" },
  { name: "JetBrains Rider Editor", kind: "package" },
  { name: "Mathematics", kind: "package" },
];

function TreeRow({ row, selected }: { row: Row; selected: boolean }) {
  if (row.kind === "root") {
    return (
      <li className={clsx("h-8 flex items-center pl-1.5", row.gap && "mt-[30px]", selected && "bg-[#4d4d4d]")}>
        <Foldout open />
        <span className="w-11 pl-2.5 flex">{row.name === "Favorites" ? <Star /> : <FolderOpen />}</span>
        <span className="font-semibold text-[#d8d8d8]">{row.name}</span>
      </li>
    );
  }
  return (
    <li className="h-8 flex items-center pl-[34px]">
      <span className="w-7 flex">{row.kind === "package" && <Foldout open={false} />}</span>
      {row.kind === "search" ? <Magnifier /> : <Folder />}
      <span className="pl-2 text-[#d2d2d2] whitespace-nowrap">{row.name}</span>
    </li>
  );
}

function ScriptableThumb() {
  return (
    <svg viewBox="0 0 128 128" className="w-32 h-32 fill-none" strokeLinejoin="round">
      <g transform="translate(1 2)" stroke="#8fd3f8" strokeWidth="8">
        <path d="M64 105l-5 3L24 89q-5-3-5-8V39q0-5 5-8L54 14q5-3 10 0l31 17q5 3 5 8v21" />
        <path d="M21 36l38.500 23L98 36M59.500 59v46" />
      </g>
      <path d="M97 69h-6q-7 0-7 7v9q0 8-8 8 8 0 8 8v9q0 7 7 7h6M104 69h6q7 0 7 7v9q0 8 8 8-8 0-8 8v9q0 7-7 7h-6" stroke="#ec7347" strokeWidth="8" />
    </svg>
  );
}

function FolderThumb() {
  return (
    <svg viewBox="0 0 128 128" className="w-32 h-32 fill-[#c2c2c2]">
      <path d="M23 24h34l10 16h38a7 7 0 0 1 7 7v50a7 7 0 0 1-7 7H23a7 7 0 0 1-7-7V31a7 7 0 0 1 7-7z" />
    </svg>
  );
}

const assets = [
  { name: "Readme", folder: false },
  { name: "Scenes", folder: true },
  { name: "Settings", folder: true },
  { name: "TutorialInfo", folder: true },
  { name: "UniversalR...", folder: false },
];

function Project() {
  const [size, setSize] = useState(60);
  return (
    <section className="h-[538px] shrink-0 flex flex-col">
      <TabBar lock>
        <Tab active className="w-40 gap-2 pl-3 shadow-[inset_0_3px_0_#3a5f8f]"><Folder />Project</Tab>
        <Tab className="gap-2.5 pl-[18px]"><ConsoleIcon />Console</Tab>
      </TabBar>
      <div className="h-[42px] shrink-0 flex items-stretch bg-[#3c3c3c] border-b-2 border-[#232323]">
        <AddButton />
        <div className="flex-1" />
        <SearchBox className="w-[636px] my-1 mr-1" />
        <IconButton label="Search by type" className="w-[52px] border-l-2 border-[#232323]"><TypeFilterIcon /></IconButton>
        <IconButton label="Search by label" className="w-[52px] border-l-2 border-[#232323]"><TagIcon /></IconButton>
        <IconButton label="Search by import log" className="w-[52px] border-l-2 border-[#232323]"><AlertIcon /></IconButton>
        <IconButton label="Save search" className="w-[52px] border-l-2 border-[#232323] text-[#828282]"><Star /></IconButton>
        <button type="button" aria-label="Hidden packages" className="w-20 flex items-center justify-center gap-1 border-l-2 border-[#232323]">
          <EyeIcon />17
        </button>
      </div>
      <div className="flex-1 min-h-0 flex">
        <ul className="w-[386px] shrink-0 overflow-hidden bg-[#383838]">
          {rows.map((row) => (
            <TreeRow key={row.name} row={row} selected={row.name === "Assets"} />
          ))}
        </ul>
        <div className="w-7 shrink-0 flex flex-col items-center bg-[#353535] border-r-2 border-[#232323] py-3">
          <Caret className="w-3.5 h-2 rotate-180" />
          <div className="mt-3 w-5 h-56 rounded-full bg-[#5f5f5f]" />
          <div className="flex-1" />
          <Caret className="w-3.5 h-2" />
        </div>
        <div className="flex-1 min-w-0 flex flex-col bg-[#333]">
          <div className="h-[42px] shrink-0 flex items-center bg-[#404040] pl-2 font-semibold">Assets</div>
          <ul className="flex-1 flex pl-[18px] pt-5">
            {assets.map((a) => (
              <li key={a.name} className="w-[152px] flex flex-col items-center gap-1">
                {a.folder ? <FolderThumb /> : <ScriptableThumb />}
                <span className="text-xl leading-6 text-[#d2d2d2]">{a.name}</span>
              </li>
            ))}
          </ul>
          <div className="h-[42px] shrink-0 flex items-center justify-end bg-[#404040] pr-8">
            <input
              type="range"
              aria-label="Icon size"
              value={size}
              onChange={(e) => setSize(Number(e.target.value))}
              className="w-[110px] h-1 appearance-none bg-[#5e5e5e] [&::-webkit-slider-thumb]:appearance-none [&::-webkit-slider-thumb]:w-5 [&::-webkit-slider-thumb]:h-5 [&::-webkit-slider-thumb]:rounded-full [&::-webkit-slider-thumb]:bg-[#999]"
            />
          </div>
        </div>
      </div>
    </section>
  );
}

/* ---------- inspector + status ---------- */

function Inspector() {
  return (
    <section className="w-[562px] shrink-0 flex flex-col">
      <TabBar lock className="pr-2">
        <Tab active className="w-[188px] gap-2.5 pl-[18px]"><InfoIcon />Inspector</Tab>
      </TabBar>
      <div className="flex-1 bg-[#383838]" />
    </section>
  );
}

function StatusBar() {
  return (
    <footer className="h-[42px] shrink-0 flex justify-end pt-1">
      <IconButton label="Debugger disabled" className="w-[52px] border-l-2 border-[#222]"><BugOffIcon /></IconButton>
      <IconButton label="Cache server disabled" className="w-[52px] border-l-2 border-[#222]"><CacheOffIcon /></IconButton>
      <IconButton label="Auto generate lighting off" className="w-[52px] border-l-2 border-[#222]"><AutoLightOffIcon /></IconButton>
      <IconButton label="Background tasks" className="w-12 border-l-2 border-[#222] bg-[#484848]"><DoneIcon /></IconButton>
    </footer>
  );
}

export default function App() {
  return (
    <div className="h-screen bg-[#6a7072]">
      <div className="h-full flex flex-col rounded-[20px] overflow-hidden bg-[#191919] text-[#c4c4c4] font-[Inter,'Liberation_Sans',sans-serif] text-2xl leading-8">
        <TitleBar />
        <MainToolbar />
        <main className="flex-1 min-h-0 flex gap-1">
          <div className="flex-1 min-w-0 flex flex-col gap-1">
            <div className="flex-1 min-h-0 flex gap-1">
              <Hierarchy />
              <SceneView />
            </div>
            <Project />
          </div>
          <Inspector />
        </main>
        <StatusBar />
      </div>
    </div>
  );
}
